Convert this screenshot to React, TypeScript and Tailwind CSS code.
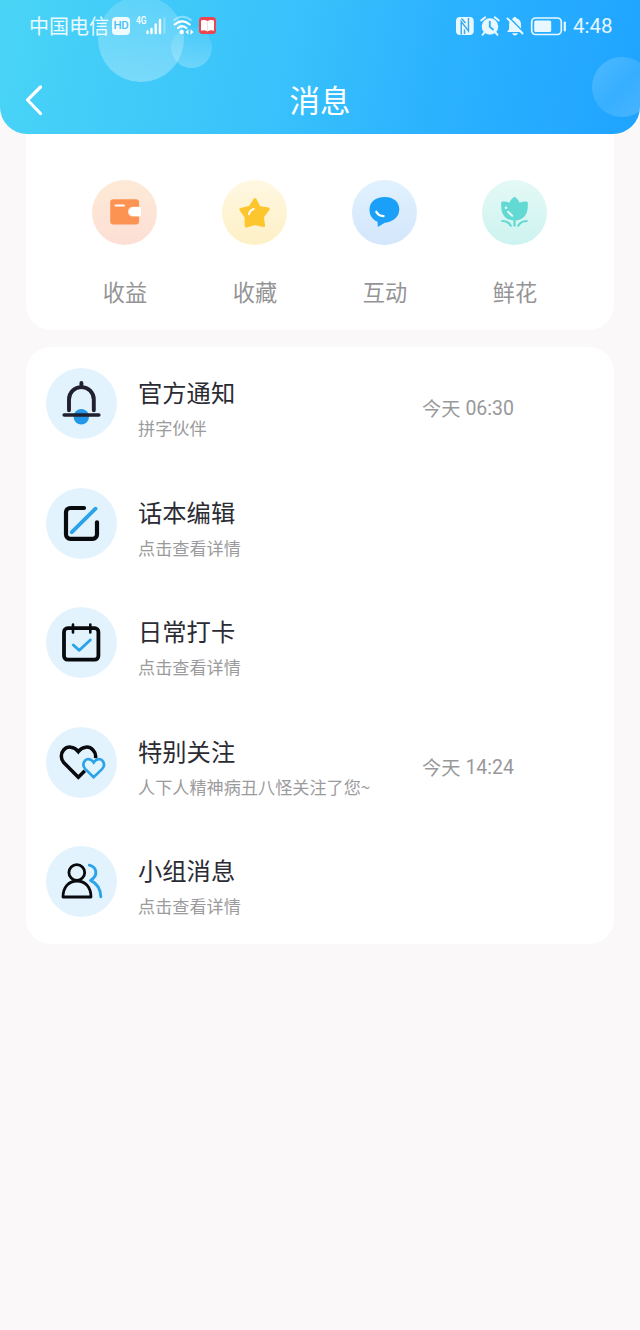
import type { ReactNode } from "react";

function StatusBar() {
  return (
    <div className="relative flex h-[52px] items-center pl-[29px] text-white/90">
      <span className="w-[80px] whitespace-nowrap text-[20px] leading-none">中国电信</span>
      <span className="ml-[3px] flex h-[18px] w-[18px] items-center justify-center rounded-[4px] bg-white/90 font-['Roboto'] text-[11.5px] font-medium leading-none tracking-tight text-[#4cc0f5]">
        HD
      </span>
      <svg className="ml-[6px] h-[36px] w-[30px]" viewBox="136 8 30 36" fill="none">
        <text x="136" y="24" fill="#fff" fontFamily="Roboto" fontSize="10.500" fontWeight="500" textLength="10.5" lengthAdjust="spacingAndGlyphs">4G</text>
        <path d="M147.500 31.500v1.500M151.500 29v4M155.700 24.500v8.500M160 20v13" stroke="#fff" strokeWidth="2.400" strokeLinecap="round" />
        <path d="M164.400 17.500v16" stroke="#fff" strokeOpacity=".3" strokeWidth="2" />
      </svg>
      <svg className="ml-[6px] h-[22px] w-[23px]" viewBox="172 15 23 22" fill="none">
        <path d="M173.500 20.500q9-7.500 18 0" stroke="#fff" strokeOpacity=".4" strokeWidth="2" />
        <path d="M174.700 24.500q7.500-6.500 15 0M178 28q4.200-3.500 8.400 0" stroke="#fff" strokeWidth="2.200" strokeLinecap="round" />
        <circle cx="181.700" cy="32" r="2.200" fill="#fff" />
        <path d="M185.500 32l3-2.800v5.600zM193.500 32l-3-2.800v5.600z" fill="#fff" />
      </svg>
      <svg className="ml-[3px] h-[20px] w-[19px]" viewBox="198 16 19 20">
        <rect x="199" y="17" width="17" height="17" rx="3.500" fill="#ee4450" />
        <path d="M201 20.500q3.500-1.500 6.500.6q3-2.100 6.500-.6v10.300q-3.500-1.200-6.500.6q-3-1.800-6.500-.6z" fill="#fff" />
        <path d="M207.500 21.500v9" stroke="#f8ccd0" strokeWidth=".7" />
      </svg>
      <svg className="ml-auto h-[24px] w-[113px]" viewBox="455 13 113 24" fill="none">
        <rect x="456" y="16" width="17.700" height="18" rx="4" fill="#e9f8ff" />
        <path d="M461.200 33.500V20.500l7.300 9.500V17M461.500 17.500l4 4.500M464.500 28.500v4.500" stroke="#34a9ef" strokeWidth="1.400" />
        <circle cx="490" cy="25.500" r="8.300" fill="#e9f8ff" />
        <path d="M481.200 19.500l4-3.200M498.800 19.500l-4-3.200M484.500 31.500l-2 2.300M495.500 31.500l2 2.300" stroke="#e9f8ff" strokeWidth="2" strokeLinecap="round" />
        <path d="M489.800 20.800v5l3.200 2.600" stroke="#2eafff" strokeWidth="1.900" strokeLinecap="round" />
        <path d="M514.800 15.800a1.800 1.800 0 0 1 1.600 1.500c3 .8 4.600 3 4.600 6v5l2 2.700h-16l2.100-2.700v-5c0-3 1.500-5.200 4.200-6a1.700 1.700 0 0 1 1.500-1.500zM512 32.200h6q-1 2.300-3 2.300t-3-2.300z" fill="#e9f8ff" />
        <path d="M508.700 16l15.300 15.500" stroke="#2eafff" strokeWidth="1.700" />
        <path d="M507.500 17.500l15 15" stroke="#e9f8ff" strokeWidth="1.900" strokeLinecap="round" />
        <rect x="531.700" y="17" width="29.600" height="16.500" rx="4" stroke="#e9f8ff" strokeWidth="1.700" />
        <rect x="534.200" y="19.500" width="17" height="11.500" rx="1.500" fill="#e9f8ff" />
        <path d="M564.800 21.500v8" stroke="#e9f8ff" strokeWidth="2.200" strokeLinecap="round" />
      </svg>
      <span className="ml-[5px] mr-[27px] w-[40px] whitespace-nowrap font-['Roboto'] text-[20.500px] leading-none">4:48</span>
    </div>
  );
}

function Header() {
  return (
    <header className="relative z-10 h-[134px] overflow-hidden rounded-b-[27px] bg-[linear-gradient(102deg,#49d4f6_0%,#38c1fb_45%,#2ab1ff_70%,#1fa4ff_100%)] text-white">
      <div className="absolute -top-[4px] left-[98px] size-[86px] rounded-full bg-linear-to-b from-white/15 to-white/30" />
      <div className="absolute left-[171px] top-[27px] size-[41px] rounded-full bg-linear-to-b from-white/5 to-white/25" />
      <div className="absolute left-[592px] top-[57px] size-[60px] rounded-full bg-linear-to-br from-white/20 via-white/10 to-white/20" />
      <StatusBar />
      <div className="relative flex h-[82px] items-center justify-center pb-[1px] pt-[14px]">
        <svg className="absolute left-[22px] top-[31px] h-[34px] w-[24px]" viewBox="0 0 24 34" fill="none">
          <path d="M18.500 4L5.500 17l13 13.500" stroke="#fff" strokeWidth="3.200" strokeLinecap="round" strokeLinejoin="round" />
        </svg>
        <h1 className="text-[30.500px] leading-none">消息</h1>
      </div>
    </header>
  );
}

const shortcuts: { label: string; tint: string; icon: ReactNode }[] = [
  {
    label: "收益",
    tint: "bg-linear-to-b from-[#fdead6] to-[#fddfd5]",
    icon: (
      <>
        <path d="M21.500 19.300h22.300a3.300 3.300 0 0 1 3.300 3.300v4.200h-6.300a4.900 4.900 0 0 0 0 9.800h6.300v4.700a3.300 3.300 0 0 1-3.300 3.300H21.500a3.300 3.300 0 0 1-3.300-3.300V22.600a3.300 3.300 0 0 1 3.300-3.300z" fill="#fd9353" />
        <path d="M49 27.300h-7.300a4.300 4.300 0 0 0 0 8.600H49z" fill="#fff" />
        <path d="M23.500 25.500h8.500" stroke="#fff" strokeWidth="2" strokeLinecap="round" />
      </>
    ),
  },
  {
    label: "收藏",
    tint: "bg-linear-to-b from-[#fff8e2] to-[#fdf0c6]",
    icon: (
      <>
        <path d="M33 19.500l4.100 8 9.100 1.500-5.800 7.800 1.200 8.800-8.700-2.100-8.700 2.600-.1-9.300-5.300-7.400 9.200-2.100z" fill="#fdc62e" stroke="#fdc62e" strokeWidth="3" strokeLinejoin="round" />
        <path d="M27 34.200q.7-4 4.700-5.200" stroke="#fff" strokeWidth="2" strokeLinecap="round" />
      </>
    ),
  },
  {
    label: "互动",
    tint: "bg-linear-to-b from-[#e1f1fe] to-[#d3e6fb]",
    icon: (
      <>
        <path d="M32.500 17c9 0 14.800 4.800 14.800 12.300 0 7.600-5.800 12.500-14.500 13.500l-7 4.200-.2-5.200c-5.200-2-8.100-6.500-8.100-12C17.500 22 23.500 17 32.500 17z" fill="#1ba0f9" />
        <path d="M24.300 31.800q2 4.200 7.300 4.300" stroke="#fff" strokeWidth="2.300" strokeLinecap="round" />
      </>
    ),
  },
  {
    label: "鲜花",
    tint: "bg-linear-to-b from-[#e4f9f5] to-[#cdf3f0]",
    icon: (
      <>
        <path d="M20.500 21.500q4-.2 6.800 1.300 1.200-3.300 3.600-4.900 1.600-1.700 3.200 0 2.400 1.600 3.600 4.900 2.800-1.500 6.800-1.300 1.700 0 1.300 2.500c.5 11-4.500 16.300-13.300 16.500-8.800-.2-13.800-5.500-13.300-16.500q-.4-2.500 1.300-2.500z" fill="#63d9d3" />
        <path d="M32.500 39v7.500" stroke="#63d9d3" strokeWidth="2.300" />
        <path d="M20.300 41q6 .2 8.500 4.700M44.700 41q-6 .2-8.500 4.700" stroke="#63d9d3" strokeWidth="2.200" strokeLinecap="round" />
        <circle cx="24" cy="27.700" r="1.300" fill="#e8fbf9" />
        <path d="M26 31.800l4.200 4" stroke="#e8fbf9" strokeWidth="2" strokeLinecap="round" />
      </>
    ),
  },
];

const blue = "#2ca3e8";

const messages: { title: string; detail: string; time?: string[]; icon: ReactNode }[] = [
  {
    title: "官方通知",
    detail: "拼字伙伴",
    time: ["今天", "06:30"],
    icon: (
      <>
        <circle cx="35.300" cy="48.700" r="7.700" fill="#2297ea" />
        <path d="M23 42.300V31.500a12.400 12.400 0 0 1 24.800 0v10.800M35.400 15v4" stroke="#20202f" strokeWidth="3.900" strokeLinecap="round" />
        <path d="M18.200 47h34.600" stroke="#20202f" strokeWidth="3.600" strokeLinecap="round" />
      </>
    ),
  },
  {
    title: "话本编辑",
    detail: "点击查看详情",
    icon: (
      <>
        <path d="M38 20H24.300a4.300 4.300 0 0 0-4.300 4.300v22.200a4.300 4.300 0 0 0 4.300 4.300h22.400a4.300 4.300 0 0 0 4.300-4.300V34.500" stroke="#080a0d" strokeWidth="4.200" />
        <path d="M37.500 20h.5M51 34.300v.5" stroke="#080a0d" strokeWidth="4.200" strokeLinecap="round" />
        <path d="M25.800 44.200L49.500 20.700" stroke={blue} strokeWidth="3.900" strokeLinecap="round" />
      </>
    ),
  },
  {
    title: "日常打卡",
    detail: "点击查看详情",
    icon: (
      <>
        <rect x="18" y="21.200" width="34.400" height="31.500" rx="3.700" stroke="#080a0d" strokeWidth="3.800" />
        <path d="M27 17.500v8M44.300 17.500v8" stroke="#080a0d" strokeWidth="2.600" strokeLinecap="round" />
        <path d="M27.300 38l6 5.300 11-10.300" stroke={blue} strokeWidth="2.900" strokeLinecap="round" strokeLinejoin="round" />
      </>
    ),
  },
  {
    title: "特别关注",
    detail: "人下人精神病丑八怪关注了您~",
    time: ["今天", "14:24"],
    icon: (
      <>
        <path d="M38.800 43.800l-6.500 6.500L17.700 35.500C14.500 32 14.600 26.400 17.600 23c3.800-4.200 10.500-3.900 14.700 1.600 4.200-5.500 10.900-5.800 14.700-1.600a9.400 9.400 0 0 1 2.500 8.300" stroke="#080a0d" strokeWidth="3.500" strokeLinejoin="miter" />
        <path d="M47.700 50.200l-8.300-8.100c-4.700-4.800.1-12.600 5.600-9.200q1.600.9 2.700 2.500 1.100-1.600 2.700-2.500c5.500-3.400 10.300 4.400 5.600 9.200z" fill="#e0f5ff" stroke={blue} strokeWidth="2.700" strokeLinejoin="miter" />
      </>
    ),
  },
  {
    title: "小组消息",
    detail: "点击查看详情",
    icon: (
      <>
        <circle cx="30.800" cy="26.500" r="7.900" stroke="#080a0d" strokeWidth="2.800" />
        <path d="M17 51c0-9.500 5.500-16 14-16s14 6.500 14 16z" stroke="#080a0d" strokeWidth="2.800" strokeLinejoin="round" />
        <path d="M43.300 19.200c8 2.200 9 10.600 1.200 15.200 6.500 3 10 8.500 10.300 16.300" stroke={blue} strokeWidth="2.900" strokeLinecap="round" strokeLinejoin="round" />
      </>
    ),
  },
];

export default function App() {
  return (
    <div className="min-h-[1330px] w-[640px] bg-[#faf8f9] font-['Noto_Sans_CJK_SC',sans-serif]">
      <Header />
      <main className="flex flex-col gap-[18px] px-[26px]">
        <section className="-mt-[10px] grid h-[206px] grid-cols-4 rounded-b-[25px] bg-white pl-[34px] pr-[34px] pt-[56px]">
          {shortcuts.map((item) => (
            <div key={item.label} className="flex flex-col items-center">
              <div className={`mr-px size-[65px] rounded-full ${item.tint}`}>
                <svg className="size-[65px]" viewBox="0 0 65 65" fill="none">{item.icon}</svg>
              </div>
              <span className="mt-[34px] text-[22.200px] leading-[24px] text-[#949496]">{item.label}</span>
            </div>
          ))}
        </section>
        <section className="-mt-px h-[597px] rounded-[25px] bg-white pl-[20px] pt-[21px]">
          {messages.map((item) => (
            <div key={item.title} className="flex h-[119.500px]">
              <div className="size-[71px] shrink-0 rounded-full bg-[#e3f3fe]">
                <svg className="size-[71px]" viewBox="0 0 71 71" fill="none">{item.icon}</svg>
              </div>
              <div className="ml-[21px] flex w-[284px] flex-col pt-[9px]">
                <h2 className="text-[24.300px] leading-[30px] text-[#2b2b33]">{item.title}</h2>
                <p className="mt-[10px] whitespace-nowrap text-[17.150px] leading-[22px] text-[#9b9b9d]">{item.detail}</p>
              </div>
              {item.time && (
                <time className="flex gap-[5px] whitespace-nowrap pt-[28px] text-[19.200px] leading-[24px] text-[#98989a]">
                  <span>{item.time[0]}</span>
                  <span className="pt-px font-['Roboto'] text-[19.500px]">{item.time[1]}</span>
                </time>
              )}
            </div>
          ))}
        </section>
      </main>
    </div>
  );
}
